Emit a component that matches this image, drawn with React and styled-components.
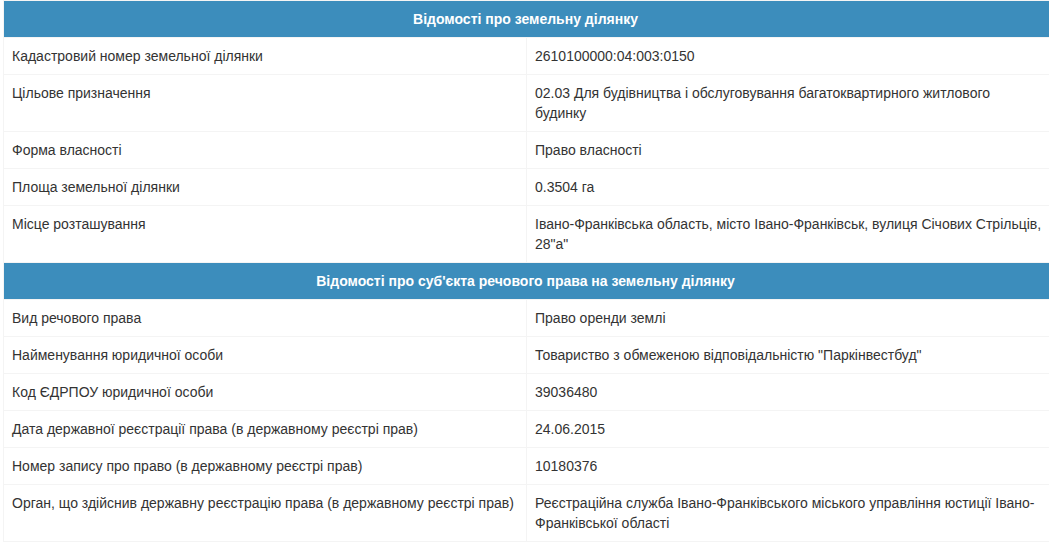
import React from 'react'
import styled, { createGlobalStyle } from 'styled-components'

const sections = [
  {
    title: 'Відомості про земельну ділянку',
    rows: [
      ['Кадастровий номер земельної ділянки', '2610100000:04:003:0150'],
      ['Цільове призначення', '02.03 Для будівництва і обслуговування багатоквартирного житлового будинку'],
      ['Форма власності', 'Право власності'],
      ['Площа земельної ділянки', '0.3504 га'],
      ['Місце розташування', 'Івано-Франківська область, місто Івано-Франківськ, вулиця Січових Стрільців, 28"а"'],
    ],
  },
  {
    title: "Відомості про суб'єкта речового права на земельну ділянку",
    rows: [
      ['Вид речового права', 'Право оренди землі'],
      ['Найменування юридичної особи', 'Товариство з обмеженою відповідальністю "Паркінвестбуд"'],
      ['Код ЄДРПОУ юридичної особи', '39036480'],
      ['Дата державної реєстрації права (в державному реєстрі прав)', '24.06.2015'],
      ['Номер запису про право (в державному реєстрі прав)', '10180376'],
      ['Орган, що здійснив державну реєстрацію права (в державному реєстрі прав)', 'Реєстраційна служба Івано-Франківського міського управління юстиції Івано-Франківської області'],
    ],
  },
]

function App() {
  return (
    <>
      <GlobalStyle />
      <Wrapper>
        <Table>
          <colgroup>
            <col style={{ width: '523px' }} />
            <col />
          </colgroup>
          {sections.map((section) => (
            <tbody key={section.title}>
              <tr>
                <HeadCell colSpan={2}>{section.title}</HeadCell>
              </tr>
              {section.rows.map(([label, value]) => (
                <tr key={label}>
                  <Cell>{label}</Cell>
                  <Cell>{value}</Cell>
                </tr>
              ))}
            </tbody>
          ))}
        </Table>
      </Wrapper>
    </>
  )
}

export default App

const GlobalStyle = createGlobalStyle`
  html, body {
    overflow: hidden;
  }
  body {
    margin: 0;
    background: #fff;
    font-family: "Liberation Sans", Arial, sans-serif;
    font-size: 14px;
    color: #333;
  }
`;

const Wrapper = styled.div`
  padding: 0 0 0 3px;
  width: 1046px;
  overflow: hidden;
`;

const Table = styled.table`
  width: 1049px;
  border-collapse: collapse;
  border-spacing: 0;
  table-layout: fixed;
  border: 1px solid #f4f4f4;
`;

const Cell = styled.td`
  padding: 8px;
  line-height: 20px;
  vertical-align: top;
  border: 1px solid #f4f4f4;
  color: #333;
`;

const HeadCell = styled.td`
  padding: 8px 4px 8px 0;
  line-height: 20px;
  text-align: center;
  font-weight: bold;
  font-size: 14px;
  color: #fff;
  background: #3c8dbc;
  border: 1px solid #f4f4f4;
`;
